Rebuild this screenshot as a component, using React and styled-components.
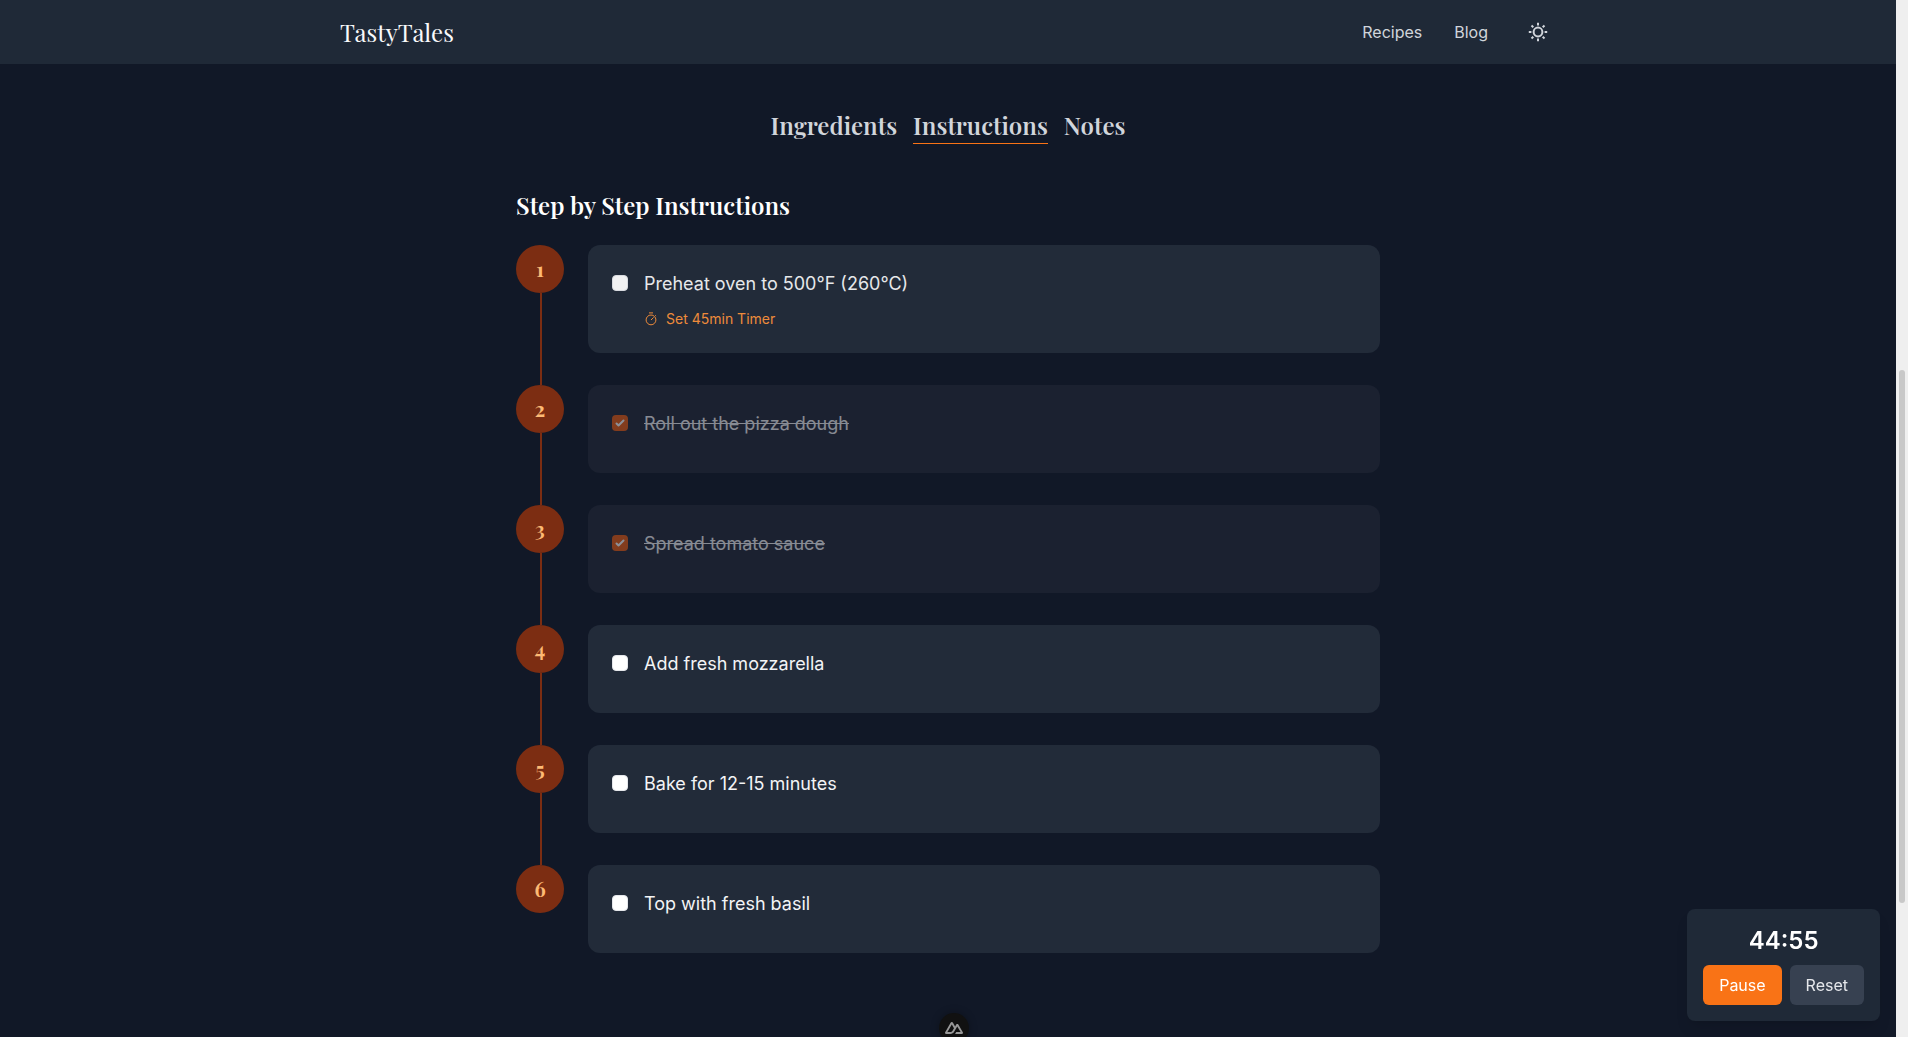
import React, { useState } from 'react';
import styled, { createGlobalStyle } from 'styled-components';

const initialSteps = [
    { id: 1, text: 'Preheat oven to 500°F (260°C)', timer: 45, done: false, running: true },
    { id: 2, text: 'Roll out the pizza dough', done: true },
    { id: 3, text: 'Spread tomato sauce', done: true },
    { id: 4, text: 'Add fresh mozzarella', done: false },
    { id: 5, text: 'Bake for 12-15 minutes', done: false },
    { id: 6, text: 'Top with fresh basil', done: false },
];

const tabs = ['Ingredients', 'Instructions', 'Notes'];

function SunIcon(){
    return (
        <svg width="20" height="20" viewBox="0 0 20 20" fill="none" stroke="currentColor" strokeWidth="2" aria-hidden="true">
            <circle cx="10" cy="10" r="4.4"/>
            <path d="M10 .8v2.6M10 16.6v2.6M.8 10h2.6M16.6 10h2.6M3.5 3.5l1.8 1.8M14.7 14.7l1.8 1.8M3.5 16.5l1.8-1.8M14.7 5.3l1.8-1.8"/>
        </svg>
    )
}

function TimerIcon(){
    return (
        <svg width="14" height="14" viewBox="0 0 14 14" fill="none" stroke="currentColor" strokeWidth="1" aria-hidden="true">
            <circle cx="7" cy="7.9" r="4.9"/>
            <path d="M5 .9h4M7 8l2.6-2.6M11.2 3.3l.9.9"/>
        </svg>
    )
}

function NuxtLogo(){
    return (
        <svg width="18" height="12" viewBox="0 150 900 600" fill="currentColor" aria-hidden="true">
            <path d="M504.908 750H839.476C850.103 750.001 860.542 747.229 869.745 741.963C878.948 736.696 886.589 729.121 891.9 719.999C897.211 710.876 900.005 700.529 900 689.997C899.995 679.465 897.193 669.12 891.873 660.002L667.187 274.289C661.876 265.169 654.237 257.595 645.036 252.329C635.835 247.064 625.398 244.291 614.773 244.291C604.149 244.291 593.711 247.064 584.511 252.329C575.31 257.595 567.67 265.169 562.36 274.289L504.908 372.979L392.581 179.993C387.266 170.874 379.623 163.301 370.42 158.036C361.216 152.772 350.777 150 340.151 150C329.525 150 319.086 152.772 309.883 158.036C300.679 163.301 293.036 170.874 287.721 179.993L8.126 660.002C2.807 669.12 0.005 679.465 0 689.997C-0.005 700.529 2.789 710.876 8.1 719.999C13.411 729.121 21.052 736.696 30.255 741.963C39.458 747.229 49.897 750.001 60.524 750H270.538C353.748 750 415.112 713.775 457.336 643.101L559.849 467.145L614.757 372.979L779.547 655.834H559.849L504.908 750ZM267.114 655.737L120.551 655.704L340.249 278.586L449.87 467.145L376.474 593.175C348.433 639.03 316.577 655.737 267.114 655.737Z"/>
        </svg>
    )
}

function App(){
    const [steps, setSteps] = useState(initialSteps);
    const [tab, setTab] = useState('Instructions');

    const toggle = id => setSteps(steps.map(s => s.id === id ? { ...s, done: !s.done } : s));

    return (
        <Shell>
            <GlobalStyle/>
            <Page>
                <Header>
                    <HeaderInner>
                        <Logo href="#home">TastyTales</Logo>
                        <Menu>
                            <MenuLink href="#recipes">Recipes</MenuLink>
                            <MenuLink href="#blog">Blog</MenuLink>
                            <ThemeButton type="button" aria-label="Toggle theme"><SunIcon/></ThemeButton>
                        </Menu>
                    </HeaderInner>
                </Header>
                <Main>
                    <Tabs>
                        {tabs.map(name => (
                            <Tab key={name} type="button" $active={tab === name} onClick={() => setTab(name)}>{name}</Tab>
                        ))}
                    </Tabs>
                    <Title>Step by Step Instructions</Title>
                    <StepList>
                        {steps.map(step => (
                            <Step key={step.id}>
                                <Rail>
                                    <StepNumber>{step.id}</StepNumber>
                                </Rail>
                                <Card $done={step.done}>
                                    <CardContent $done={step.done} $running={step.running}>
                                        <Checkbox id={`step-${step.id}`} type="checkbox" checked={step.done} onChange={() => toggle(step.id)}/>
                                        <CardBody>
                                            <StepText htmlFor={`step-${step.id}`} $done={step.done}>{step.text}</StepText>
                                            <Extras>
                                                {step.timer ? <SetTimer type="button"><TimerIcon/>Set {step.timer}min Timer</SetTimer> : null}
                                            </Extras>
                                        </CardBody>
                                    </CardContent>
                                </Card>
                            </Step>
                        ))}
                    </StepList>
                </Main>
            </Page>
            <ScrollTrack><ScrollThumb/></ScrollTrack>
            <TimerPanel>
                <Time>44:55</Time>
                <TimerActions>
                    <Action type="button" $primary>Pause</Action>
                    <Action type="button">Reset</Action>
                </TimerActions>
            </TimerPanel>
            <DevBadge type="button" aria-label="Devtools"><NuxtLogo/></DevBadge>
        </Shell>
    )
}

const serif = '"Playfair Display", "Liberation Serif", serif';

const GlobalStyle = createGlobalStyle`
    *, *:before, *:after {
        box-sizing: border-box;
    }

    body {
        margin: 0;
        background: #111827;
        color: #f3f4f6;
        font-family: Inter, "Liberation Sans", sans-serif;
        font-size: 16px;
        line-height: 24px;
        overflow: hidden;
    }

    button {
        padding: 0;
        border: 0;
        background: none;
        color: inherit;
        font: inherit;
        cursor: pointer;
    }
`;

const Shell = styled.div`
    display: grid;
    grid-template-columns: 1fr 12px;
    height: 100vh;
`;

const Page = styled.div`
    min-width: 0;
    overflow: hidden;
`;

const Header = styled.header`
    background: #1f2937;
`;

const HeaderInner = styled.div`
    display: flex;
    align-items: center;
    justify-content: space-between;
    max-width: 1280px;
    height: 64px;
    margin: 0 auto;
    padding: 0 32px;
`;

const Logo = styled.a`
    color: #f9fafb;
    font-family: ${serif};
    font-size: 24px;
    line-height: 32px;
    text-decoration: none;
`;

const Menu = styled.nav`
    display: flex;
    align-items: center;
    gap: 32px;
`;

const MenuLink = styled.a`
    color: #d1d5db;
    text-decoration: none;
`;

const ThemeButton = styled.button`
    display: flex;
    padding: 8px;
    color: #d1d5db;
`;

const Main = styled.main`
    max-width: 896px;
    margin: 0 auto;
    padding: 45px 16px 32px;
`;

const Tabs = styled.div`
    display: flex;
    justify-content: center;
    gap: 16px;
    margin-bottom: 45px;
`;

const Tab = styled.button`
    padding-bottom: 2px;
    border-bottom: 1px solid ${props => props.$active ? '#f97316' : 'transparent'};
    color: #d1d5db;
    font-family: ${serif};
    font-size: 24px;
    font-weight: 600;
    line-height: 32px;
`;

const Title = styled.h2`
    margin: 0 0 24px;
    color: #fff;
    font-family: ${serif};
    font-size: 24px;
    font-weight: 600;
    line-height: 32px;
`;

const StepList = styled.ol`
    margin: 0;
    padding: 0;
    list-style: none;
`;

const Rail = styled.div`
    display: flex;
    flex-direction: column;
    align-items: center;
    width: 48px;

    &:after {
        content:"";
        flex: 1;
        width: 2px;
        margin-left: 2px;
        background: #7c2d12;
    }
`;

const Step = styled.li`
    display: flex;
    gap: 24px;

    &:last-child ${Rail}:after {
        display: none;
    }
`;

const StepNumber = styled.div`
    width: 48px;
    height: 48px;
    border-radius: 50%;
    background: #7c2d12;
    color: #fdba74;
    font-family: ${serif};
    font-size: 20px;
    font-weight: 700;
    line-height: 48px;
    text-align: center;
`;

const Card = styled.div`
    flex: 1;
    margin-bottom: 32px;
    padding: 24px;
    border-radius: 12px;
    background: ${props => props.$done ? '#1b2130' : '#222b39'};
`;

const CardContent = styled.div`
    display: flex;
    gap: 16px;
    opacity: ${props => props.$done ? '0.5' : props.$running ? '0.94' : '1'};
`;

const Checkbox = styled.input`
    appearance: none;
    flex: none;
    width: 16px;
    height: 16px;
    margin: 6px 0 0;
    border: 1px solid #e5e7eb;
    border-radius: 4px;
    background: #fff;

    &:checked {
        border: 0;
        background: #ea580c url("data:image/svg+xml,%3Csvg xmlns='http://www.w3.org/2000/svg' viewBox='0 0 16 16' fill='white'%3E%3Cpath d='M12.207 4.793a1 1 0 010 1.414l-5 5a1 1 0 01-1.414 0l-2-2a1 1 0 011.414-1.414L6.5 9.086l4.293-4.293a1 1 0 011.414 0z'/%3E%3C/svg%3E") center / 16px no-repeat;
    }
`;

const CardBody = styled.div`
    flex: 1;
`;

const StepText = styled.label`
    display: block;
    color: #f3f4f6;
    font-size: 18px;
    line-height: 30px;
    text-decoration: ${props => props.$done ? 'line-through' : 'none'};
`;

const Extras = styled.div`
    padding-top: 10px;
`;

const SetTimer = styled.button`
    display: flex;
    align-items: center;
    gap: 8px;
    color: #fb923c;
    font-size: 14px;
    line-height: 20px;
`;

const ScrollTrack = styled.div`
    display: grid;
    grid-template-rows: 370fr 533fr 134fr;
    padding: 0 3px;
    background: #efefef;
`;

const ScrollThumb = styled.div`
    grid-row: 2;
    border-radius: 3px;
    background: #c8c8c8;
`;

const TimerPanel = styled.aside`
    position: fixed;
    right: 28px;
    bottom: 16px;
    padding: 16px;
    border-radius: 8px;
    background: #1f2937;
    box-shadow: 0 10px 15px -3px rgba(0, 0, 0, 0.1), 0 4px 6px -4px rgba(0, 0, 0, 0.1);
`;

const Time = styled.div`
    margin-bottom: 8px;
    color: #fff;
    font-size: 24px;
    font-weight: 600;
    line-height: 32px;
    text-align: center;
`;

const TimerActions = styled.div`
    display: flex;
    gap: 8px;
`;

const Action = styled.button`
    padding: 8px 16px;
    border-radius: 6px;
    background: ${props => props.$primary ? '#f97316' : '#374151'};
    color: ${props => props.$primary ? '#fff' : '#e5e7eb'};
`;

const DevBadge = styled.button`
    position: fixed;
    bottom: -6px;
    left: 50%;
    display: flex;
    align-items: flex-start;
    justify-content: center;
    width: 30px;
    height: 30px;
    padding-top: 9px;
    border-radius: 50%;
    background: #111;
    color: #999;
    transform: translateX(-50%);
    box-shadow: 0 0 8px rgba(0, 0, 0, 0.3);
`;

export default App;
